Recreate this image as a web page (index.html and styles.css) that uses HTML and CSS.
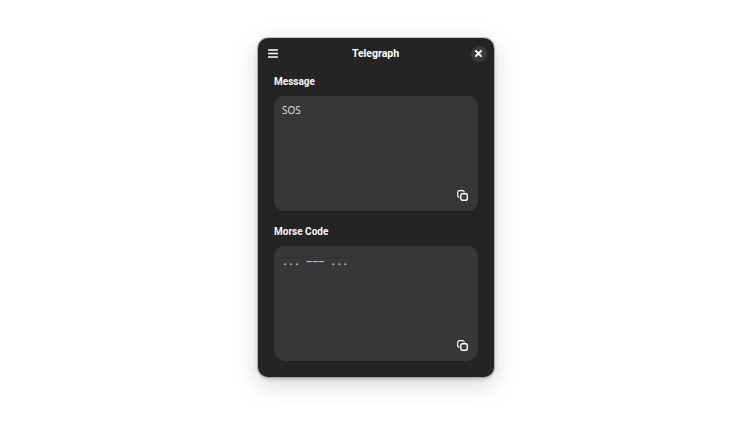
FILE: index.html
```html
<!DOCTYPE html>
<html lang="en">
<head>
<meta charset="utf-8">
<title>Telegraph</title>
<link rel="stylesheet" href="styles.css">
</head>
<body>
<main class="window">
  <header class="titlebar">
    <button class="menu" aria-label="Menu">
      <svg width="10" height="9" viewBox="0 0 10 9"><path d="M.5 1h9M.5 4.5h9M.5 8h9" stroke="#fff" stroke-width="1.4" stroke-linecap="round" fill="none"/></svg>
    </button>
    <h1 class="title">Telegraph</h1>
    <button class="close" aria-label="Close">
      <svg width="7" height="7" viewBox="0 0 7 7"><path d="M1 1l5 5M6 1l-5 5" stroke="#fff" stroke-width="1.8" stroke-linecap="round" fill="none"/></svg>
    </button>
  </header>
  <section class="content">
    <h2 class="label">Message</h2>
    <div class="box">
      <p class="text">SOS</p>
      <svg class="copy" width="11" height="11" viewBox="0 0 11 11"><path d="M2.4 7.2H2.2A1.5 1.5 0 0 1 .7 5.7V2.2A1.5 1.5 0 0 1 2.2.7h3.5a1.5 1.5 0 0 1 1.5 1.5v.2" stroke="#fff" stroke-width="1.2" fill="none"/><rect x="3.8" y="3.8" width="6.5" height="6.5" rx="1.5" stroke="#fff" stroke-width="1.4" fill="none"/></svg>
    </div>
    <h2 class="label label-second">Morse Code</h2>
    <div class="box">
      <p class="text morse">... −−− ...</p>
      <svg class="copy" width="11" height="11" viewBox="0 0 11 11"><path d="M2.4 7.2H2.2A1.5 1.5 0 0 1 .7 5.7V2.2A1.5 1.5 0 0 1 2.2.7h3.5a1.5 1.5 0 0 1 1.5 1.5v.2" stroke="#fff" stroke-width="1.2" fill="none"/><rect x="3.8" y="3.8" width="6.5" height="6.5" rx="1.5" stroke="#fff" stroke-width="1.4" fill="none"/></svg>
    </div>
  </section>
</main>
</body>
</html>
```
FILE: styles.css
```css
* { box-sizing: border-box; }
html, body { margin: 0; height: 100%; }
body {
  background: #fff;
  font-family: "Noto Sans", "Open Sans", sans-serif;
  color: #fff;
  overflow: hidden;
  display: flex;
  justify-content: center;
  align-items: flex-start;
  padding-top: 38px;
}
.window {
  width: 236px;
  height: 339px;
  background: #242424;
  border-radius: 10px;
  box-shadow: 0 0 0 1px rgba(0,0,0,.16), 0 2px 4px rgba(0,0,0,.2), 0 7px 26px rgba(0,0,0,.17);
  display: flex;
  flex-direction: column;
}
.titlebar {
  height: 32px;
  padding: 0 7px 0 10px;
  display: flex;
  align-items: center;
  justify-content: space-between;
  flex: none;
}
.menu, .close {
  border: 0;
  padding: 0;
  display: flex;
  align-items: center;
  justify-content: center;
  background: none;
}
.menu { width: 10px; height: 9px; margin-top: -1px; }
.close {
  width: 16px;
  height: 16px;
  border-radius: 50%;
  background: #3b3b3b;
  margin-top: -1px;
}
.title {
  margin: 0 0 1px 2px;
  font-family: Roboto, "Noto Sans", sans-serif;
  font-size: 10.5px;
  line-height: 16px;
  font-weight: 700;
}
.content {
  padding: 4px 16px 16px;
  display: flex;
  flex-direction: column;
  flex: 1;
}
.label {
  margin: 0;
  font-family: Roboto, "Noto Sans", sans-serif;
  font-size: 10px;
  line-height: 16px;
  height: 16px;
  font-weight: 700;
  color: #fafafa;
}
.label-second { margin-top: 13px; }
.box {
  margin-top: 6px;
  height: 115px;
  background: #373737;
  border-radius: 10px;
  padding: 7px 8px;
  position: relative;
  flex: none;
  box-shadow: 0 1px 1px rgba(0,0,0,.12);
}
.text {
  margin: 0;
  font-size: 10px;
  line-height: 15px;
  color: #dedede;
}
.morse {
  font-family: "DejaVu Sans Mono", "Liberation Mono", monospace;
  padding-top: 1px;
}
.copy {
  position: absolute;
  right: 10px;
  bottom: 10px;
}
```
